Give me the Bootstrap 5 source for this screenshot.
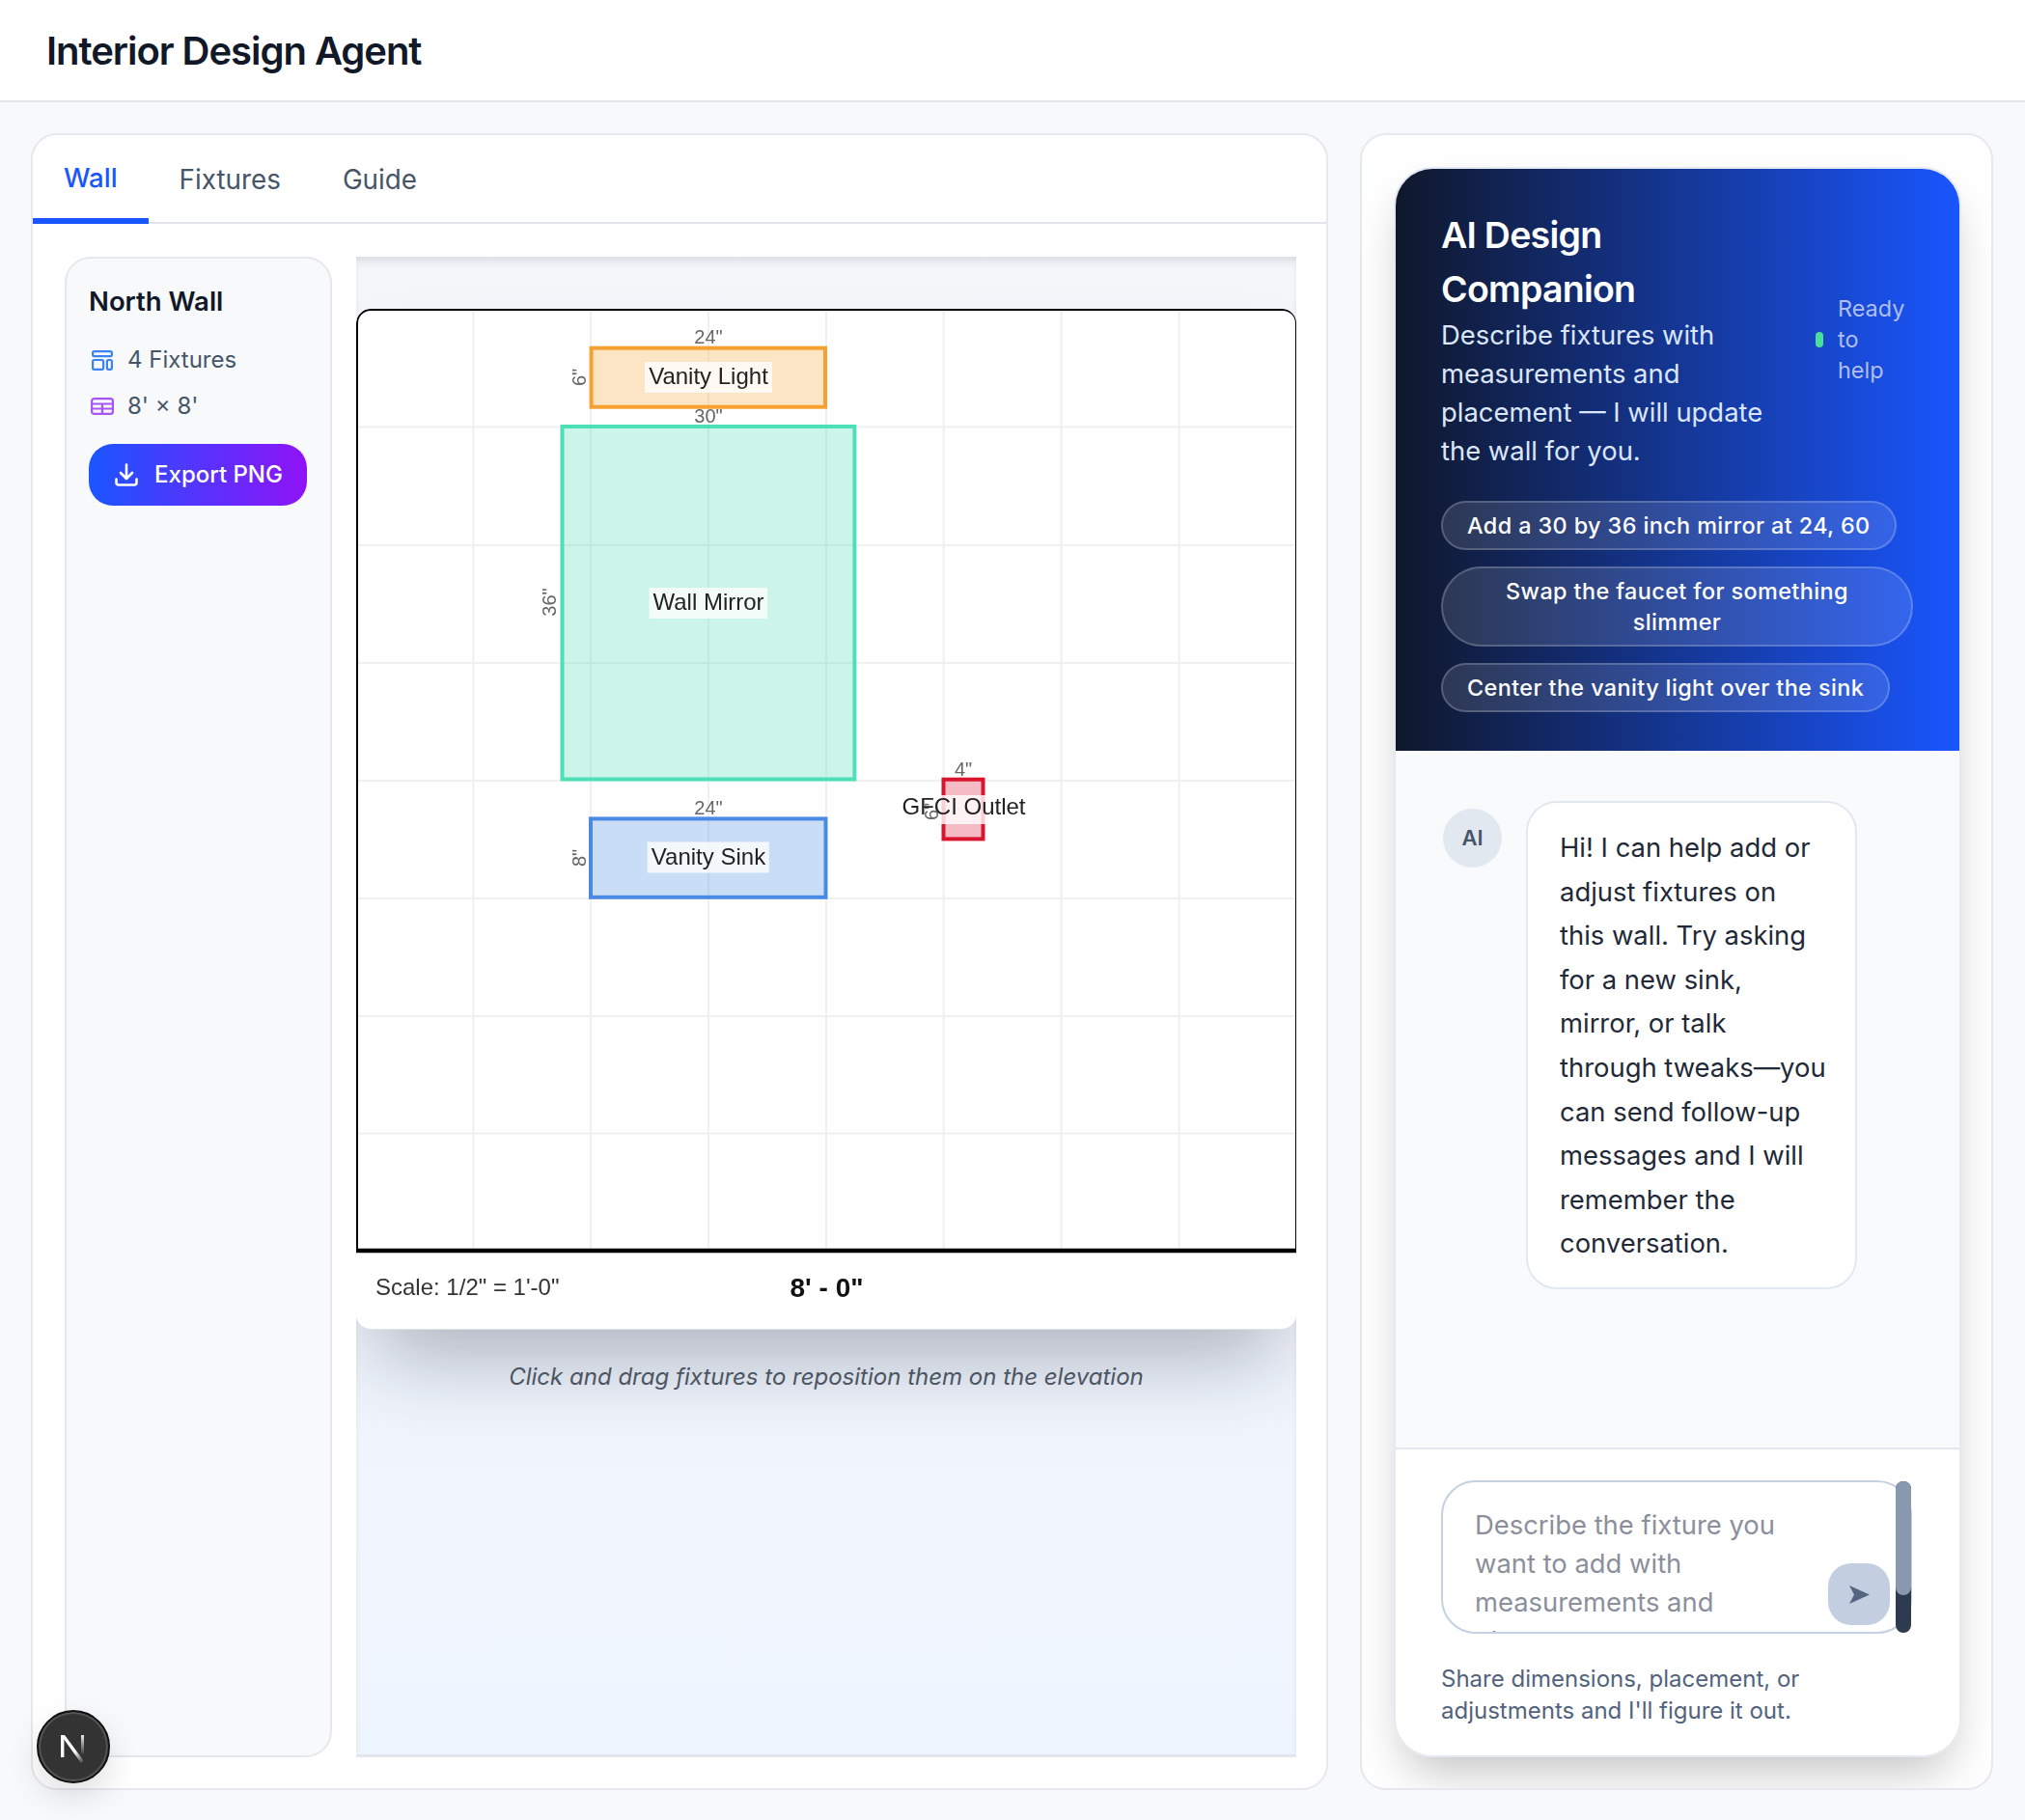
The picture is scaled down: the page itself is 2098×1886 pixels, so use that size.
<!DOCTYPE html>
<html lang="en">
<head>
    <meta charset="UTF-8">
    <meta name="viewport" content="width=device-width, initial-scale=1.0">
    <title>Interior Design Agent</title>
    <link href="https://cdn.jsdelivr.net/npm/bootstrap@5.3.0/dist/css/bootstrap.min.css" rel="stylesheet">
    <style>
        body {
            font-family: Inter, "Noto Sans", sans-serif;
            background: #f8f9fb;
            color: #111827;
        }
        .app-head {
            height: 106px;
            padding: 2px 0 0 48px;
            background: #fff;
            border-bottom: 2px solid #e2e5ea;
        }
        .app-head h1 { font-size: 40px; font-weight: 600; margin: 0; color: #111827; letter-spacing: -1.04px; }
        .app-main { padding: 32px 33px 31px 32px; gap: 33px; min-height: 0; }
        .work-card, .chat-card {
            border: 2px solid #e5e8ee;
            border-radius: 27px;
            background: #fff;
        }
        .work-card { flex: 1 1 0; min-width: 0; }
        .chat-card { flex: 0 0 656px; padding: 33px 31px 32px 33px; overflow: hidden; }
        .work-tabs { height: 92px; border-bottom: 2px solid #e2e6ec; flex-wrap: nowrap; }
        .work-tabs .nav-link {
            height: 92px;
            padding: 0 32px 0 32px;
            margin: 0;
            border: 0;
            border-radius: 0;
            font-size: 27.8px;
            font-weight: 400;
            color: #475569;
            background: none;
            line-height: 92px;
        }
        .work-tabs .nav-link.active {
            color: #1a56ff;
            font-size: 27.5px;
            font-weight: 500;
            border-bottom: 6px solid #1a56ff;
            background: none;
            line-height: 88px;
        }
        .work-body { padding: 34px 31px 32px 33px; gap: 25px; min-height: 0; }
        .side-panel {
            flex: 0 0 276px;
            padding: 26px 24px;
            background: #f8f9fb;
            border: 2px solid #e4e7ec;
            border-radius: 27px;
        }
        .side-title { font-size: 27.5px; font-weight: 600; line-height: 36px; margin: 0 0 19px -1px; color: #111827; }
        .stat-row { display: flex; align-items: center; height: 48px; gap: 14px; font-size: 24px; color: #475569; }
        .stat-ico { flex: 0 0 25px; display: flex; justify-content: center; }
        .export-btn {
            width: 226px;
            height: 64px;
            margin-top: 15px;
            margin-left: -1px;
            padding: 0 0 0 2px;
            border: 0;
            border-radius: 25px;
            color: #fff;
            font-size: 24px;
            font-weight: 450;
            background: linear-gradient(90deg, #1a56ff, #9013f7);
            gap: 17px;
        }
        .export-btn:hover { color: #fff; background: linear-gradient(90deg, #1a56ff, #9013f7); }
        .stage {
            flex: 1 1 0;
            min-width: 0;
            padding-top: 54px;
            overflow: hidden;
            background: linear-gradient(180deg, #f4f6fa, #eff5fe);
            border-bottom: 3px solid #e2e6ee;
            box-shadow: inset 0 7px 10px -3px rgba(15, 23, 42, .12);
        }
        .paper {
            background: #fff;
            border-radius: 15px;
            overflow: hidden;
            box-shadow: 0 1px 0 #dde1e8, 0 50px 80px -20px rgba(15, 23, 42, .3);
        }
        .paper svg { display: block; filter: blur(.5px); }
        .stage-note { margin: 34px 0 0; text-align: center; font-size: 24px; font-style: italic; line-height: 32px; color: #4b5563; }
        .chat-panel {
            height: 100%;
            border: 2px solid #e4e8f0;
            border-radius: 40px;
            overflow: hidden;
            background: #fff;
        }
        .chat-wrap { height: 100%; border-radius: 40px; box-shadow: 0 25px 50px -12px rgba(0, 0, 0, .25); }
        .hero {
            margin: -2px -2px 0;
            padding: 43px 50px 40px 49px;
            background: linear-gradient(90deg, #0f172a, #1a56ff);
            color: #fff;
        }
        .hero-top { gap: 24px; }
        .hero h2 { font-size: 37.5px; font-weight: 600; line-height: 56px; letter-spacing: -.75px; margin: 0; }
        .hero p { font-size: 27.4px; line-height: 40px; margin: -1px 0 0; color: #dbe6fb; }
        .ready { flex: 0 0 101px; gap: 15px; font-size: 23.4px; line-height: 32px; color: #aebff0; }
        .ready span:last-child { width: min-content; }
        .ready-dot { flex: 0 0 8px; height: 16px; border-radius: 4px; background: #4ade9c; }
        .chip-stack { margin-top: 32px; gap: 17px; }
        .chip {
            padding: 7.5px 25px;
            font-size: 23.4px;
            font-weight: 450;
            line-height: 32px;
            letter-spacing: .4px;
            color: #fff;
            border: 2px solid rgba(255, 255, 255, .2);
            border-radius: 42px;
            background: rgba(255, 255, 255, .12);
            text-align: center;
        }
        .thread { flex: 1 1 0; min-height: 0; padding: 52px 50px 0 49px; gap: 25px; background: #f8fafc; }
        .ai-mark {
            flex: 0 0 61px;
            height: 61px;
            margin-top: 8px;
            border-radius: 50%;
            background: #e2e8f0;
            color: #475569;
            font-size: 22px;
            font-weight: 600;
        }
        .bubble {
            width: 343px;
            height: 506px;
            padding: 24px 10px 13px 33px;
            font-size: 27.4px;
            line-height: 45.6px;
            color: #1f2937;
            background: #fff;
            border: 2px solid #e2e8f0;
            border-radius: 32px;
        }
        .composer { padding: 32px 49px 30px 47px; border-top: 2px solid #e2e8f0; background: #fff; }
        .ask-box { height: 159px; }
        .ask-input {
            height: 159px;
            padding: 24px 100px 0 33px;
            font-size: 27.4px;
            line-height: 40px;
            border: 2px solid #c5d0e0;
            border-radius: 36px;
            resize: none;
            overflow: hidden;
        }
        .ask-input::placeholder { color: #8b8f9c; opacity: 1; }
        .send-btn {
            position: absolute;
            right: 23px;
            top: 86px;
            width: 64px;
            height: 64px;
            padding: 0;
            border: 0;
            border-radius: 24px;
            background: #c3cfe0;
        }
        .send-btn:hover { background: #c3cfe0; }
        .fake-track {
            position: absolute;
            right: 1px;
            top: 1px;
            width: 16px;
            height: 157px;
            border-radius: 8px;
            background: #2e3a50;
        }
        .fake-thumb { height: 118px; border-radius: 8px; background: #8898ae; }
        .ask-hint { margin: 31px 0 0; font-size: 24px; line-height: 32.5px; color: #52637e; }
        .dev-mark {
            position: fixed;
            left: 38px;
            bottom: 38px;
            width: 76px;
            height: 76px;
            border-radius: 50%;
            background: #333;
            border: 2px solid #111;
            box-shadow: inset 0 0 0 2px #555, 0 14px 34px rgba(0, 0, 0, .13);
        }
    </style>
</head>
<body class="d-flex flex-column vh-100 overflow-hidden">
    <header class="app-head d-flex align-items-center flex-shrink-0">
        <h1>Interior Design Agent</h1>
    </header>

    <main class="app-main d-flex flex-grow-1">
        <section class="work-card d-flex flex-column">
            <ul class="nav nav-tabs work-tabs flex-shrink-0">
                <li class="nav-item"><a class="nav-link active" href="#">Wall</a></li>
                <li class="nav-item"><a class="nav-link" href="#">Fixtures</a></li>
                <li class="nav-item"><a class="nav-link" href="#">Guide</a></li>
            </ul>
            <div class="work-body d-flex flex-grow-1">
                <aside class="side-panel">
                    <h5 class="side-title">North Wall</h5>
                    <div class="stat-row">
                        <span class="stat-ico">
                            <svg width="22" height="21" viewBox="0 0 22 21" fill="none" stroke="#3b82f6" stroke-width="2.2">
                                <rect x="1.1" y="1.1" width="19.8" height="5" rx="1.6"/>
                                <rect x="1.1" y="10" width="11" height="9.9" rx="1.6"/>
                                <rect x="15.9" y="10" width="5" height="9.9" rx="1.6"/>
                            </svg>
                        </span>
                        4 Fixtures
                    </div>
                    <div class="stat-row">
                        <span class="stat-ico">
                            <svg width="24" height="18" viewBox="0 0 24 18" fill="none" stroke="#a855f7" stroke-width="2.2">
                                <rect x="1.1" y="1.1" width="21.8" height="15.8" rx="2.4"/>
                                <path d="M1.5 6.5h21M1.5 11.5h21M12 6.5v10"/>
                            </svg>
                        </span>
                        8' × 8'
                    </div>
                    <button class="btn export-btn d-flex align-items-center justify-content-center" type="button">
                        <svg width="24" height="24" viewBox="0 0 24 24" fill="none" stroke="#fff" stroke-width="2.6" stroke-linecap="round" stroke-linejoin="round">
                            <path d="M12 1.5v14M6 10l6 6 6-6M1.5 16.5v3.5a2.5 2.5 0 0 0 2.5 2.5h16a2.5 2.5 0 0 0 2.5-2.5v-3.5"/>
                        </svg>
                        Export PNG
                    </button>
                </aside>

                <div class="stage">
                    <div class="paper">
                        <svg width="975" height="1057" viewBox="0 0 975 1057" font-family="'Liberation Sans', Arial, sans-serif">
                            <g stroke="#f0f0f0" stroke-width="2">
                                <path d="M121.4 0v976M243.1 0v976M365 0v976M487 0v976M608.6 0v976M730.6 0v976M852.6 0v976"/>
                                <path d="M0 122.5h975M0 245h975M0 367h975M0 489h975M0 611h975M0 733h975M0 854.6h975"/>
                            </g>
                            <path d="M1 976V15a14 14 0 0 1 14-14H960a14 14 0 0 1 14 14V976" fill="none" stroke="#000" stroke-width="2"/>
                            <path d="M0 976h975" stroke="#000" stroke-width="4.5"/>

                            <rect x="243.6" y="40.7" width="242.4" height="61" fill="#f6a02c" fill-opacity=".28" stroke="#f5a030" stroke-width="4"/>
                            <rect x="213.5" y="122" width="302.9" height="365.5" fill="#34d9ad" fill-opacity=".25" stroke="#4de0b8" stroke-width="4"/>
                            <rect x="243" y="528.4" width="243.5" height="81.4" fill="#4a8ae5" fill-opacity=".29" stroke="#4a8ae5" stroke-width="4"/>
                            <rect x="608.5" y="487.7" width="41" height="61.7" fill="#dc1f3a" fill-opacity=".3" stroke="#d9142e" stroke-width="4"/>

                            <g fill="#fff" fill-opacity=".8">
                                <rect x="299" y="55" width="132" height="32"/>
                                <rect x="303.6" y="289" width="122.4" height="32"/>
                                <rect x="301.7" y="552.5" width="126.1" height="32"/>
                                <rect x="559" y="504" width="141" height="30"/>
                            </g>

                            <g font-size="20" fill="#666" text-anchor="middle">
                                <text x="365" y="36">24"</text>
                                <text x="365" y="118">30"</text>
                                <text x="365" y="524">24"</text>
                                <text x="629" y="484">4"</text>
                                <text transform="translate(238 71) rotate(-90)">6"</text>
                                <text transform="translate(207 304) rotate(-90)">36"</text>
                                <text transform="translate(238 569) rotate(-90)">8"</text>
                                <text transform="translate(603 521) rotate(-90)">6"</text>
                            </g>
                            <g font-size="24" fill="#222" text-anchor="middle">
                                <text x="365" y="78">Vanity Light</text>
                                <text x="365" y="312">Wall Mirror</text>
                                <text x="365" y="576">Vanity Sink</text>
                                <text x="629.5" y="524">GFCI Outlet</text>
                            </g>

                            <text x="20" y="1022" font-size="24" fill="#333">Scale: 1/2" = 1'-0"</text>
                            <text x="487.5" y="1024" font-size="28" font-weight="700" fill="#111" text-anchor="middle">8' - 0"</text>
                        </svg>
                    </div>
                    <p class="stage-note">Click and drag fixtures to reposition them on the elevation</p>
                </div>
            </div>
        </section>

        <section class="chat-card">
            <div class="chat-wrap">
                <div class="chat-panel d-flex flex-column">
                    <div class="hero flex-shrink-0">
                        <div class="hero-top d-flex align-items-center">
                            <div class="flex-grow-1">
                                <h2>AI Design Companion</h2>
                                <p>Describe fixtures with measurements and placement — I will update the wall for you.</p>
                            </div>
                            <div class="ready d-flex align-items-center">
                                <span class="ready-dot"></span>
                                <span>Ready to help</span>
                            </div>
                        </div>
                        <div class="chip-stack d-flex flex-column align-items-start">
                            <div class="chip">Add a 30 by 36 inch mirror at 24, 60</div>
                            <div class="chip">Swap the faucet for something slimmer</div>
                            <div class="chip">Center the vanity light over the sink</div>
                        </div>
                    </div>

                    <div class="thread d-flex align-items-start">
                        <div class="ai-mark d-flex align-items-center justify-content-center">AI</div>
                        <div class="bubble">Hi! I can help add or<br>adjust fixtures on<br>this wall. Try asking<br>for a new sink,<br>mirror, or talk<br>through tweaks—you<br>can send follow-up<br>messages and I will<br>remember the<br>conversation.</div>
                    </div>

                    <div class="composer flex-shrink-0">
                        <div class="ask-box position-relative">
                            <textarea class="form-control ask-input" placeholder="Describe the fixture you want to add with measurements and placement"></textarea>
                            <div class="fake-track"><div class="fake-thumb"></div></div>
                            <button class="btn send-btn d-flex align-items-center justify-content-center" type="button" aria-label="Send">
                                <svg width="21" height="19" viewBox="0 0 21 19"><path d="M0 0L21 9.5L0 19L5 9.5Z" fill="#556682"/></svg>
                            </button>
                        </div>
                        <p class="ask-hint">Share dimensions, placement, or adjustments and I'll figure it out.</p>
                    </div>
                </div>
            </div>
        </section>
    </main>

    <div class="dev-mark">
        <svg width="72" height="72" viewBox="0 0 72 72">
            <defs>
                <linearGradient id="nFadeA" x1="0" y1="0" x2="1" y2="1">
                    <stop offset=".6" stop-color="#fff"/>
                    <stop offset="1" stop-color="#fff" stop-opacity="0"/>
                </linearGradient>
                <linearGradient id="nFadeB" x1="0" y1="0" x2="0" y2="1">
                    <stop offset="0" stop-color="#fff" stop-opacity=".9"/>
                    <stop offset="1" stop-color="#fff" stop-opacity="0"/>
                </linearGradient>
            </defs>
            <rect x="23" y="24" width="3.4" height="23" fill="#fff"/>
            <path d="M23 24h4L47 51l-3 2Z" fill="url(#nFadeA)"/>
            <rect x="44" y="24" width="3" height="21" fill="url(#nFadeB)"/>
        </svg>
    </div>

    <script src="https://cdn.jsdelivr.net/npm/bootstrap@5.3.0/dist/js/bootstrap.bundle.min.js"></script>
</body>
</html>
